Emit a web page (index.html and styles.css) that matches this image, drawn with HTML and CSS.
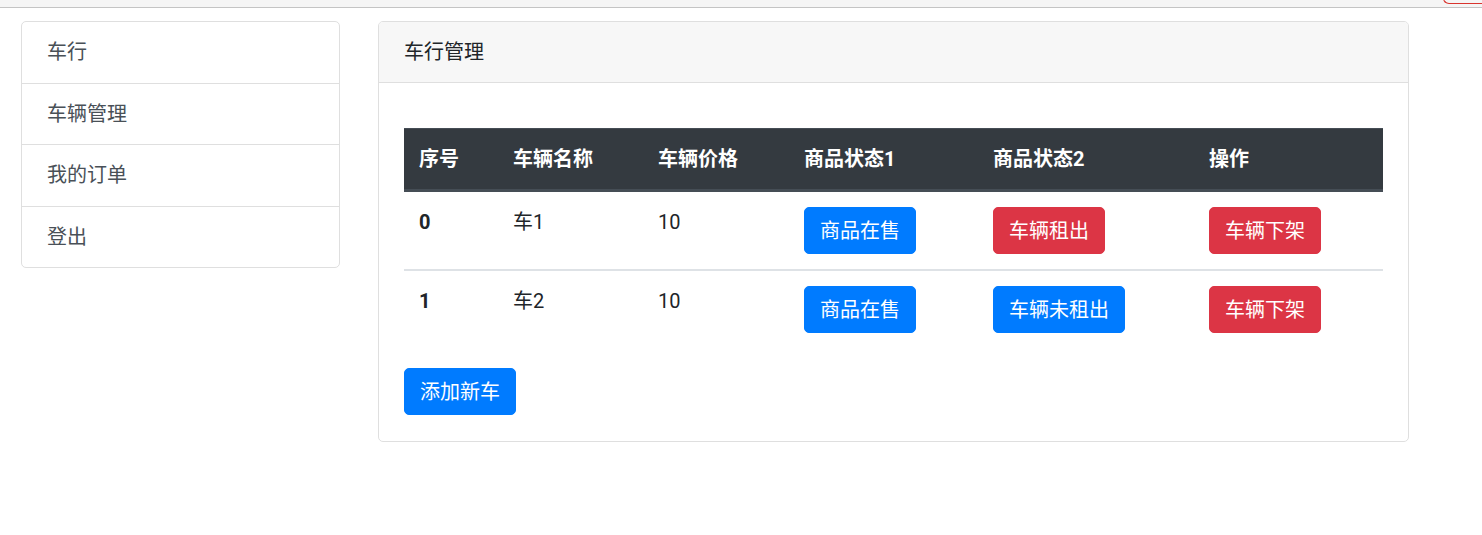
FILE: index.html
```html
<!DOCTYPE html>
<html lang="zh-CN">
<head>
<meta charset="utf-8">
<title>车行管理</title>
<link rel="stylesheet" href="styles.css">
</head>
<body>
<div class="topbar"><span class="topbar-mark"></span></div>
<div class="page">
  <aside class="sidebar">
    <a class="list-item" href="#">车行</a>
    <a class="list-item" href="#">车辆管理</a>
    <a class="list-item" href="#">我的订单</a>
    <a class="list-item" href="#">登出</a>
  </aside>
  <main class="card">
    <div class="card-header">车行管理</div>
    <div class="card-body">
      <table class="table">
        <colgroup>
          <col class="c1"><col class="c2"><col class="c3"><col class="c4"><col class="c5"><col class="c6">
        </colgroup>
        <thead>
          <tr>
            <th>序号</th>
            <th>车辆名称</th>
            <th>车辆价格</th>
            <th>商品状态1</th>
            <th>商品状态2</th>
            <th>操作</th>
          </tr>
        </thead>
        <tbody>
          <tr>
            <td class="idx">0</td>
            <td>车1</td>
            <td>10</td>
            <td><button class="btn btn-primary">商品在售</button></td>
            <td><button class="btn btn-danger">车辆租出</button></td>
            <td><button class="btn btn-danger">车辆下架</button></td>
          </tr>
          <tr>
            <td class="idx">1</td>
            <td>车2</td>
            <td>10</td>
            <td><button class="btn btn-primary">商品在售</button></td>
            <td><button class="btn btn-primary">车辆未租出</button></td>
            <td><button class="btn btn-danger">车辆下架</button></td>
          </tr>
        </tbody>
      </table>
      <button class="btn btn-primary">添加新车</button>
    </div>
  </main>
</div>
</body>
</html>
```

FILE: styles.css
```css
* { box-sizing: border-box; }

html, body {
  margin: 0;
  padding: 0;
  background: #fff;
}

body {
  font-family: Roboto, "Noto Sans CJK SC", "Noto Sans", sans-serif;
  font-size: 20px;
  line-height: 30px;
  color: #212529;
}

.topbar {
  position: relative;
  height: 8px;
  background: #f5f5f5;
  border-bottom: 1px solid #c4c4c4;
}

.topbar-mark {
  position: absolute;
  right: 0;
  top: -2px;
  width: 39px;
  height: 6px;
  border-left: 1px solid #d9352f;
  border-bottom: 1px solid #d9352f;
  border-bottom-left-radius: 9px;
}

.page {
  display: flex;
  align-items: flex-start;
  gap: 38px;
  padding: 13px 0 0 21px;
}

.sidebar {
  width: 319px;
  display: flex;
  flex-direction: column;
  border: 1px solid #dfdfdf;
  border-radius: 5px;
  overflow: hidden;
}

.list-item {
  display: block;
  padding: 15.25px 25px;
  color: #495057;
  text-decoration: none;
  border-top: 1px solid #dfdfdf;
}

.list-item:first-child {
  border-top: 0;
}

.card {
  width: 1031px;
  border: 1px solid #dfdfdf;
  border-radius: 5px;
  overflow: hidden;
}

.card-header {
  padding: 15px 25px;
  background: #f7f7f7;
  border-bottom: 1px solid #dfdfdf;
}

.card-body {
  padding: 45px 25px 26px;
}

.table {
  width: 979px;
  table-layout: fixed;
  border-collapse: collapse;
  margin-bottom: 20px;
}

.c1 { width: 94px; }
.c2 { width: 145px; }
.c3 { width: 146px; }
.c4 { width: 189px; }
.c5 { width: 216px; }
.c6 { width: 189px; }

.table th {
  background: #343a40;
  color: #fff;
  font-weight: 700;
  text-align: left;
  padding: 15px;
  border-top: 1px solid #454d55;
  border-bottom: 3px solid #454d55;
  vertical-align: bottom;
}

.table td {
  padding: 15px;
  vertical-align: top;
  text-align: left;
}

.table tbody tr + tr td {
  border-top: 2px solid #dee2e6;
}

.table td.idx {
  font-weight: 700;
}

.btn {
  display: inline-block;
  font-family: inherit;
  font-size: 20px;
  line-height: 30px;
  font-weight: 400;
  padding: 7.5px 15px;
  border: 1px solid transparent;
  border-radius: 5px;
  color: #fff;
  cursor: pointer;
  white-space: nowrap;
}

.btn-primary {
  background: #007bff;
  border-color: #007bff;
}

.btn-danger {
  background: #dc3545;
  border-color: #dc3545;
}
```
